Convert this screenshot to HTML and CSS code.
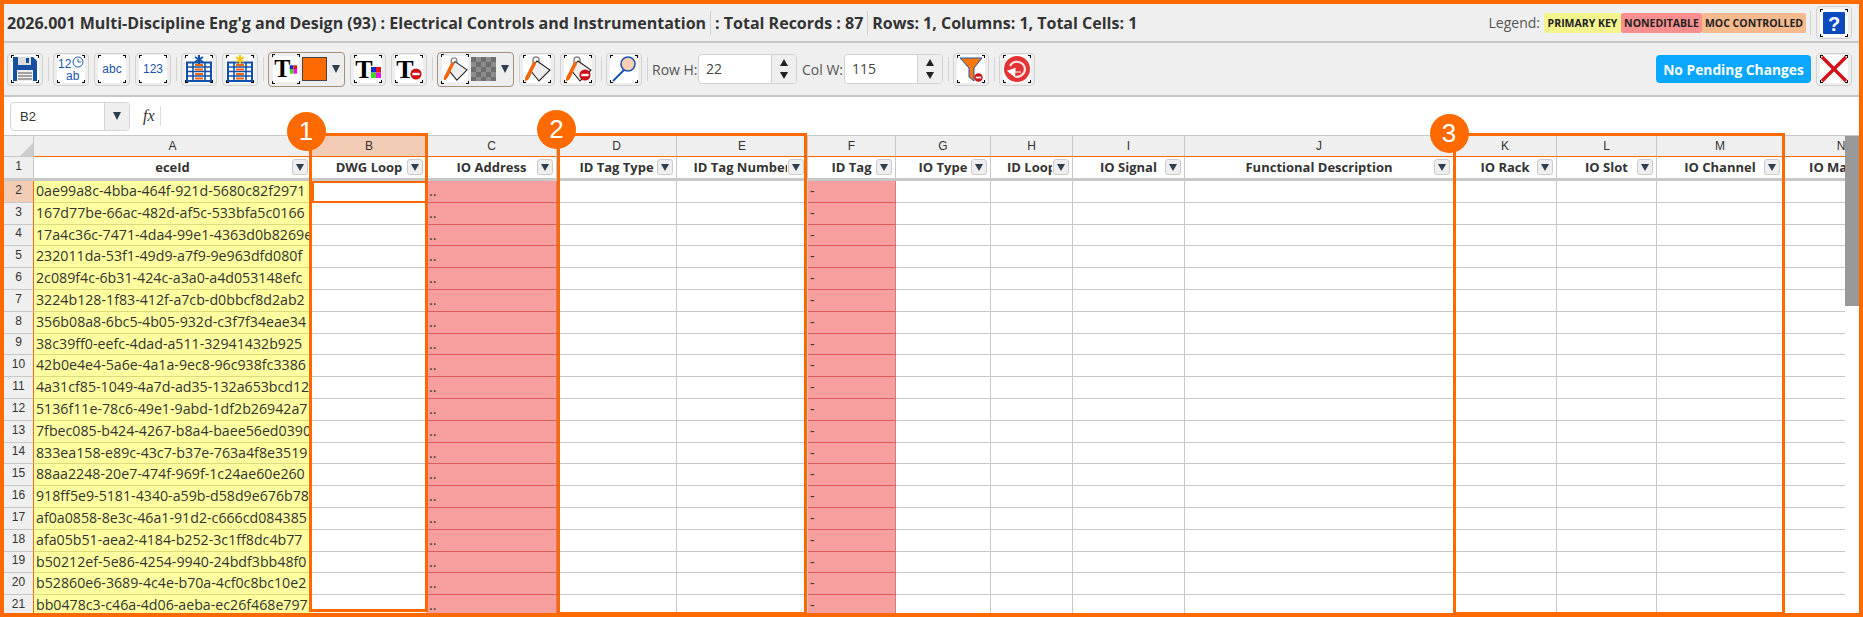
FILE: index.html
```html
<!DOCTYPE html>
<html lang="en">
<head>
    <meta charset="UTF-8">
    <title>Electrical Controls and Instrumentation</title>
    <link rel="stylesheet" href="styles.css">
</head>
<body>
    <svg class="defs" width="0" height="0">
        <symbol id="bucket" viewBox="0 0 28 28">
            <path d="M10 13 V5 a3 3 0 0 1 6 0 V10" fill="none" stroke="#888" stroke-width="1.5"/>
            <path d="M14 6 L27 15 L16 26 L7 15 Z" fill="#eee" stroke="#222" stroke-width="1.1"/>
            <path d="M12 6 C8 9 7 14 4 19 C2 22 1 26 3 26 C7 25 8 18 13 9 Z" fill="#f4640a"/>
        </symbol>
        <symbol id="minus" viewBox="0 0 12 12">
            <circle cx="6" cy="6" r="5.6" fill="#cc1016"/>
            <rect x="2.4" y="4.8" width="7.2" height="2.4" fill="#fff"/>
        </symbol>
        <symbol id="table" viewBox="0 0 28 28">
            <path d="M2 7.5 H26 V26 H2 Z" fill="#fff" stroke="#1150a8" stroke-width="2"/>
            <path d="M2 12 H26 M2 16.5 H26 M2 21 H26" stroke="#1150a8" stroke-width="1.6"/>
            <path d="M8 7.5 V26 M20 7.5 V26" stroke="#1150a8" stroke-width="1.6"/>
            <path d="M10 9 h8 v2 h-8z M10 13.5 h8 v2 h-8z M10 18 h8 v2 h-8z M10 22.5 h8 v2 h-8z" fill="#f0650f"/>
        </symbol>
        <pattern id="check" width="10" height="10" patternUnits="userSpaceOnUse">
            <rect width="10" height="10" fill="#8c8c8c"/>
            <rect width="5" height="5" fill="#6e6e6e"/>
            <rect x="5" y="5" width="5" height="5" fill="#6e6e6e"/>
        </pattern>
    </svg>

    <div class="page">
        <header class="title-bar">
            <span class="title-part">2026.001 Multi-Discipline Eng'g and Design (93) : Electrical Controls and Instrumentation</span>
            <span class="title-part">: Total Records : 87</span>
            <span class="title-part no-rule">Rows: 1, Columns: 1, Total Cells: 1</span>
            <div class="legend">
                <span class="legend-label">Legend:</span>
                <span class="chip chip-pk">PRIMARY KEY</span>
                <span class="chip chip-ro">NONEDITABLE</span>
                <span class="chip chip-moc">MOC CONTROLLED</span>
            </div>
            <span class="sep"></span>
            <button class="tool">
                <svg class="ico" viewBox="0 0 28 28"><rect x="3" y="3" width="22" height="22" rx="1" fill="#0a4bbd"/><text x="14" y="21.5" class="glyph-help">?</text></svg>
            </button>
        </header>

        <div class="toolbar">
            <button class="tool">
                <svg class="ico" viewBox="0 0 28 28">
                    <path d="M2 2 H22 L26 6 V26 H2 Z" fill="#14509f"/>
                    <rect x="7" y="2" width="13" height="8" fill="#ddd"/>
                    <rect x="15" y="3" width="3" height="5" fill="#14509f"/>
                    <rect x="6" y="15" width="16" height="11" fill="#eee"/>
                    <path d="M7 18 H21 M7 21 H21 M7 24 H21" stroke="#555" stroke-width="1.2"/>
                </svg>
            </button>
            <span class="sep"></span>
            <button class="tool">
                <svg class="ico" viewBox="0 0 28 28">
                    <text x="1" y="13" class="glyph-hand">12</text>
                    <text x="9" y="25" class="glyph-hand">ab</text>
                    <circle cx="21" cy="7" r="5" fill="none" stroke="#1a56b0" stroke-width="1"/>
                    <path d="M21 4 V7 H24" fill="none" stroke="#1a56b0" stroke-width="1"/>
                </svg>
            </button>
            <button class="tool">
                <svg class="ico" viewBox="0 0 28 28"><text x="14" y="18" class="glyph-hand mid">abc</text></svg>
            </button>
            <button class="tool">
                <svg class="ico" viewBox="0 0 28 28"><text x="14" y="18" class="glyph-hand mid">123</text></svg>
            </button>
            <span class="sep"></span>
            <button class="tool">
                <svg class="ico" viewBox="0 0 28 28">
                    <use href="#table"/>
                    <path d="M14 0 V9 M10 2 L18 7 M18 2 L10 7" stroke="#1150a8" stroke-width="2"/>
                </svg>
            </button>
            <button class="tool">
                <svg class="ico" viewBox="0 0 28 28">
                    <use href="#table"/>
                    <path d="M14 0 V9 M10 2 L18 7 M18 2 L10 7" stroke="#f5c60f" stroke-width="2"/>
                </svg>
            </button>
            <span class="sep"></span>
            <div class="tool-group">
                <span class="tool-inner">
                    <svg class="ico ico-small" viewBox="0 0 28 28">
                        <text x="10" y="23" class="glyph-t">T</text>
                        <rect x="18" y="10" width="4" height="4" fill="#0a2bd8"/><rect x="22" y="10" width="4" height="4" fill="#e8141c"/>
                        <rect x="18" y="14" width="4" height="5" fill="#3ed61f"/><rect x="22" y="14" width="4" height="5" fill="#ea14e0"/>
                    </svg>
                </span>
                <span class="swatch swatch-orange"></span>
                <span class="caret"></span>
            </div>
            <button class="tool">
                <svg class="ico" viewBox="0 0 28 28">
                    <text x="10" y="23" class="glyph-t">T</text>
                    <rect x="17" y="12" width="5" height="5.5" fill="#0a2bd8"/><rect x="22" y="12" width="5" height="5.5" fill="#e8141c"/>
                    <rect x="17" y="17.5" width="5" height="5.5" fill="#3ed61f"/><rect x="22" y="17.5" width="5" height="5.5" fill="#ea14e0"/>
                </svg>
            </button>
            <button class="tool">
                <svg class="ico" viewBox="0 0 28 28">
                    <text x="10" y="23" class="glyph-t">T</text>
                    <use href="#minus" x="15" y="13" width="12" height="12"/>
                </svg>
            </button>
            <span class="sep"></span>
            <div class="tool-group">
                <span class="tool-inner">
                    <svg class="ico ico-small" viewBox="0 0 28 28"><use href="#bucket"/></svg>
                </span>
                <span class="swatch swatch-check">
                    <svg width="25" height="24"><rect width="25" height="24" fill="url(#check)"/></svg>
                </span>
                <span class="caret"></span>
            </div>
            <button class="tool">
                <svg class="ico" viewBox="0 0 28 28"><use href="#bucket"/></svg>
            </button>
            <button class="tool">
                <svg class="ico" viewBox="0 0 28 28"><use href="#bucket"/><use href="#minus" x="15" y="14" width="12" height="12"/></svg>
            </button>
            <span class="sep"></span>
            <button class="tool">
                <svg class="ico" viewBox="0 0 28 28">
                    <path d="M15 14 L3 26" stroke="#1a56b0" stroke-width="2"/>
                    <circle cx="18" cy="9" r="7" fill="#fad0b4" stroke="#1a56b0" stroke-width="1.6"/>
                </svg>
            </button>
            <span class="sep"></span>
            <label class="spin-label spin-label-row">Row H:</label>
            <div class="spin">
                <span class="spin-value">22</span>
                <span class="spin-arrows"><i class="up"></i><i class="down"></i></span>
            </div>
            <label class="spin-label spin-label-col">Col W:</label>
            <div class="spin">
                <span class="spin-value">115</span>
                <span class="spin-arrows"><i class="up"></i><i class="down"></i></span>
            </div>
            <span class="sep"></span>
            <button class="tool">
                <svg class="ico" viewBox="0 0 28 28">
                    <path d="M3 3 H25 L17 13 V26 L12 22 V13 Z" fill="#f8760c" stroke="#1a56b0" stroke-width="1"/>
                    <use href="#minus" x="17" y="18" width="9" height="9"/>
                </svg>
            </button>
            <span class="sep"></span>
            <button class="tool">
                <svg class="ico" viewBox="0 0 28 28">
                    <circle cx="14" cy="14" r="13" fill="#e23434"/>
                    <path d="M7 11 A8 8 0 0 1 22 14 A8 8 0 0 1 12 21.5" fill="none" stroke="#fbe4e4" stroke-width="2.2"/>
                    <path d="M5 16 L12 13.5 L11.5 21 Z M11 17 H18" fill="#fff" stroke="#fff" stroke-width="1.2"/>
                </svg>
            </button>
            <button class="pending">No Pending Changes</button>
            <button class="tool">
                <svg class="ico" viewBox="0 0 28 28"><path d="M2 2 L26 26 M26 2 L2 26" stroke="#d4121a" stroke-width="3.4"/></svg>
            </button>
        </div>

        <div class="formula-bar">
            <div class="name-box">
                <span class="name-value">B2</span>
                <span class="name-drop"><span class="caret"></span></span>
            </div>
            <span class="fx">fx</span>
        </div>

        <div class="sheet">
            <div class="sheet-scroll">
                <div class="grid">
                    <div class="corner"></div>
                    <div class="col">A</div><div class="col col-active">B</div><div class="col">C</div><div class="col">D</div><div class="col">E</div><div class="col">F</div><div class="col">G</div><div class="col">H</div><div class="col">I</div><div class="col">J</div><div class="col">K</div><div class="col">L</div><div class="col">M</div><div class="col">N</div>

                    <div class="rh rh-head">1</div>
                    <div class="head">eceId<span class="filter"></span></div>
                    <div class="head">DWG Loop<span class="filter"></span></div>
                    <div class="head">IO Address<span class="filter"></span></div>
                    <div class="head">ID Tag Type<span class="filter"></span></div>
                    <div class="head">ID Tag Number<span class="filter"></span></div>
                    <div class="head">ID Tag<span class="filter"></span></div>
                    <div class="head">IO Type<span class="filter"></span></div>
                    <div class="head">ID Loop<span class="filter"></span></div>
                    <div class="head">IO Signal<span class="filter"></span></div>
                    <div class="head">Functional Description<span class="filter"></span></div>
                    <div class="head">IO Rack<span class="filter"></span></div>
                    <div class="head">IO Slot<span class="filter"></span></div>
                    <div class="head">IO Channel<span class="filter"></span></div>
                    <div class="head">IO Master<span class="filter"></span></div>

                    <div class="rh rh-active">2</div><div class="cell pk">0ae99a8c-4bba-464f-921d-5680c82f2971</div><div class="cell selected"></div><div class="cell ro">..</div><div class="cell"></div><div class="cell"></div><div class="cell ro">-</div><div class="cell"></div><div class="cell"></div><div class="cell"></div><div class="cell"></div><div class="cell"></div><div class="cell"></div><div class="cell"></div><div class="cell"></div>
                    <div class="rh">3</div><div class="cell pk">167d77be-66ac-482d-af5c-533bfa5c0166</div><div class="cell"></div><div class="cell ro">..</div><div class="cell"></div><div class="cell"></div><div class="cell ro">-</div><div class="cell"></div><div class="cell"></div><div class="cell"></div><div class="cell"></div><div class="cell"></div><div class="cell"></div><div class="cell"></div><div class="cell"></div>
                    <div class="rh">4</div><div class="cell pk">17a4c36c-7471-4da4-99e1-4363d0b8269e</div><div class="cell"></div><div class="cell ro">..</div><div class="cell"></div><div class="cell"></div><div class="cell ro">-</div><div class="cell"></div><div class="cell"></div><div class="cell"></div><div class="cell"></div><div class="cell"></div><div class="cell"></div><div class="cell"></div><div class="cell"></div>
                    <div class="rh">5</div><div class="cell pk">232011da-53f1-49d9-a7f9-9e963dfd080f</div><div class="cell"></div><div class="cell ro">..</div><div class="cell"></div><div class="cell"></div><div class="cell ro">-</div><div class="cell"></div><div class="cell"></div><div class="cell"></div><div class="cell"></div><div class="cell"></div><div class="cell"></div><div class="cell"></div><div class="cell"></div>
                    <div class="rh">6</div><div class="cell pk">2c089f4c-6b31-424c-a3a0-a4d053148efc</div><div class="cell"></div><div class="cell ro">..</div><div class="cell"></div><div class="cell"></div><div class="cell ro">-</div><div class="cell"></div><div class="cell"></div><div class="cell"></div><div class="cell"></div><div class="cell"></div><div class="cell"></div><div class="cell"></div><div class="cell"></div>
                    <div class="rh">7</div><div class="cell pk">3224b128-1f83-412f-a7cb-d0bbcf8d2ab2</div><div class="cell"></div><div class="cell ro">..</div><div class="cell"></div><div class="cell"></div><div class="cell ro">-</div><div class="cell"></div><div class="cell"></div><div class="cell"></div><div class="cell"></div><div class="cell"></div><div class="cell"></div><div class="cell"></div><div class="cell"></div>
                    <div class="rh">8</div><div class="cell pk">356b08a8-6bc5-4b05-932d-c3f7f34eae34</div><div class="cell"></div><div class="cell ro">..</div><div class="cell"></div><div class="cell"></div><div class="cell ro">-</div><div class="cell"></div><div class="cell"></div><div class="cell"></div><div class="cell"></div><div class="cell"></div><div class="cell"></div><div class="cell"></div><div class="cell"></div>
                    <div class="rh">9</div><div class="cell pk">38c39ff0-eefc-4dad-a511-32941432b925</div><div class="cell"></div><div class="cell ro">..</div><div class="cell"></div><div class="cell"></div><div class="cell ro">-</div><div class="cell"></div><div class="cell"></div><div class="cell"></div><div class="cell"></div><div class="cell"></div><div class="cell"></div><div class="cell"></div><div class="cell"></div>
                    <div class="rh">10</div><div class="cell pk">42b0e4e4-5a6e-4a1a-9ec8-96c938fc3386</div><div class="cell"></div><div class="cell ro">..</div><div class="cell"></div><div class="cell"></div><div class="cell ro">-</div><div class="cell"></div><div class="cell"></div><div class="cell"></div><div class="cell"></div><div class="cell"></div><div class="cell"></div><div class="cell"></div><div class="cell"></div>
                    <div class="rh">11</div><div class="cell pk">4a31cf85-1049-4a7d-ad35-132a653bcd12</div><div class="cell"></div><div class="cell ro">..</div><div class="cell"></div><div class="cell"></div><div class="cell ro">-</div><div class="cell"></div><div class="cell"></div><div class="cell"></div><div class="cell"></div><div class="cell"></div><div class="cell"></div><div class="cell"></div><div class="cell"></div>
                    <div class="rh">12</div><div class="cell pk">5136f11e-78c6-49e1-9abd-1df2b26942a7</div><div class="cell"></div><div class="cell ro">..</div><div class="cell"></div><div class="cell"></div><div class="cell ro">-</div><div class="cell"></div><div class="cell"></div><div class="cell"></div><div class="cell"></div><div class="cell"></div><div class="cell"></div><div class="cell"></div><div class="cell"></div>
                    <div class="rh">13</div><div class="cell pk">7fbec085-b424-4267-b8a4-baee56ed0390</div><div class="cell"></div><div class="cell ro">..</div><div class="cell"></div><div class="cell"></div><div class="cell ro">-</div><div class="cell"></div><div class="cell"></div><div class="cell"></div><div class="cell"></div><div class="cell"></div><div class="cell"></div><div class="cell"></div><div class="cell"></div>
                    <div class="rh">14</div><div class="cell pk">833ea158-e89c-43c7-b37e-763a4f8e3519</div><div class="cell"></div><div class="cell ro">..</div><div class="cell"></div><div class="cell"></div><div class="cell ro">-</div><div class="cell"></div><div class="cell"></div><div class="cell"></div><div class="cell"></div><div class="cell"></div><div class="cell"></div><div class="cell"></div><div class="cell"></div>
                    <div class="rh">15</div><div class="cell pk">88aa2248-20e7-474f-969f-1c24ae60e260</div><div class="cell"></div><div class="cell ro">..</div><div class="cell"></div><div class="cell"></div><div class="cell ro">-</div><div class="cell"></div><div class="cell"></div><div class="cell"></div><div class="cell"></div><div class="cell"></div><div class="cell"></div><div class="cell"></div><div class="cell"></div>
                    <div class="rh">16</div><div class="cell pk">918ff5e9-5181-4340-a59b-d58d9e676b78</div><div class="cell"></div><div class="cell ro">..</div><div class="cell"></div><div class="cell"></div><div class="cell ro">-</div><div class="cell"></div><div class="cell"></div><div class="cell"></div><div class="cell"></div><div class="cell"></div><div class="cell"></div><div class="cell"></div><div class="cell"></div>
                    <div class="rh">17</div><div class="cell pk">af0a0858-8e3c-46a1-91d2-c666cd084385</div><div class="cell"></div><div class="cell ro">..</div><div class="cell"></div><div class="cell"></div><div class="cell ro">-</div><div class="cell"></div><div class="cell"></div><div class="cell"></div><div class="cell"></div><div class="cell"></div><div class="cell"></div><div class="cell"></div><div class="cell"></div>
                    <div class="rh">18</div><div class="cell pk">afa05b51-aea2-4184-b252-3c1ff8dc4b77</div><div class="cell"></div><div class="cell ro">..</div><div class="cell"></div><div class="cell"></div><div class="cell ro">-</div><div class="cell"></div><div class="cell"></div><div class="cell"></div><div class="cell"></div><div class="cell"></div><div class="cell"></div><div class="cell"></div><div class="cell"></div>
                    <div class="rh">19</div><div class="cell pk">b50212ef-5e86-4254-9940-24bdf3bb48f0</div><div class="cell"></div><div class="cell ro">..</div><div class="cell"></div><div class="cell"></div><div class="cell ro">-</div><div class="cell"></div><div class="cell"></div><div class="cell"></div><div class="cell"></div><div class="cell"></div><div class="cell"></div><div class="cell"></div><div class="cell"></div>
                    <div class="rh">20</div><div class="cell pk">b52860e6-3689-4c4e-b70a-4cf0c8bc10e2</div><div class="cell"></div><div class="cell ro">..</div><div class="cell"></div><div class="cell"></div><div class="cell ro">-</div><div class="cell"></div><div class="cell"></div><div class="cell"></div><div class="cell"></div><div class="cell"></div><div class="cell"></div><div class="cell"></div><div class="cell"></div>
                    <div class="rh">21</div><div class="cell pk">bb0478c3-c46a-4d06-aeba-ec26f468e797</div><div class="cell"></div><div class="cell ro">..</div><div class="cell"></div><div class="cell"></div><div class="cell ro">-</div><div class="cell"></div><div class="cell"></div><div class="cell"></div><div class="cell"></div><div class="cell"></div><div class="cell"></div><div class="cell"></div><div class="cell"></div>
                </div>
            </div>
            <div class="scrollbar"><div class="scroll-thumb"></div></div>
        </div>

        <!-- callouts drawn over the sheet -->
        <div class="callout callout-1"><span class="badge">1</span></div>
        <div class="callout callout-2"><span class="badge">2</span></div>
        <div class="callout callout-3"><span class="badge">3</span></div>
    </div>
</body>
</html>
```

FILE: styles.css
```css
:root {
    --orange: #ff6a00;
    --rule: #c8c8c8;
    --panel: #efefef;
    --text: #333;
}

* {
    margin: 0;
    padding: 0;
    box-sizing: border-box;
}

body {
    background: #fff;
    color: var(--text);
    font-family: 'Open Sans', sans-serif;
    overflow: hidden;
}

.defs {
    position: absolute;
}

.page {
    position: relative;
    display: flex;
    flex-direction: column;
    width: 1863px;
    height: 617px;
    border: 4px solid var(--orange);
    overflow: hidden;
}

/* title row */
.title-bar {
    display: flex;
    align-items: center;
    height: 39px;
    padding: 0 7px 0 3px;
    background: var(--panel);
    border-bottom: 2px solid var(--rule);
    font-size: 16px;
    font-weight: 700;
    white-space: nowrap;
}

.title-part {
    padding-right: 4px;
    margin-right: 4px;
    border-right: 1px solid #d0d0d0;
    line-height: 24px;
}

.title-part.no-rule {
    border-right: 0;
}

.legend {
    display: flex;
    align-items: center;
    margin-left: auto;
}

.legend-label {
    margin-right: 4px;
    font-size: 14px;
    font-weight: 400;
    color: #555;
}

.chip {
    display: flex;
    align-items: center;
    justify-content: center;
    height: 20px;
    border-radius: 2px;
    font-size: 10.5px;
    font-weight: 700;
    color: #222;
}

.chip-pk { width: 77px; background: #f5f58d; }
.chip-ro { width: 81px; background: #f98f8f; }
.chip-moc { width: 104px; background: #f7b98e; }

.sep {
    flex: none;
    width: 1px;
    height: 24px;
    background: #d4d4d4;
}

.title-bar .sep {
    margin: 0 5px 0 4px;
}

/* toolbar */
.toolbar {
    display: flex;
    align-items: center;
    gap: 5px;
    height: 54px;
    padding: 0 7px 0 3px;
    background: var(--panel);
    border-bottom: 2px solid var(--rule);
}

.toolbar .sep {
    margin-right: -1px;
}

.tool {
    position: relative;
    flex: none;
    display: flex;
    align-items: center;
    justify-content: center;
    width: 36px;
    height: 33px;
    background: #eee;
    border: 1px solid #d2d2d2;
    border-radius: 4px;
}

.tool::after,
.tool-inner::after {
    content: "";
    position: absolute;
    inset: 1.5px 3px;
    background:
        linear-gradient(#000, #000) 0 0 / 3px 1px no-repeat,
        linear-gradient(#000, #000) 0 0 / 1px 3px no-repeat,
        linear-gradient(#000, #000) 100% 0 / 3px 1px no-repeat,
        linear-gradient(#000, #000) 100% 0 / 1px 3px no-repeat,
        linear-gradient(#000, #000) 0 100% / 3px 1px no-repeat,
        linear-gradient(#000, #000) 0 100% / 1px 3px no-repeat,
        linear-gradient(#000, #000) 100% 100% / 3px 1px no-repeat,
        linear-gradient(#000, #000) 100% 100% / 1px 3px no-repeat;
}

.ico {
    display: block;
    flex: none;
    width: 28px;
    height: 28px;
    background: #fff;
}

.ico-small {
    width: 26px;
    height: 26px;
}

.tool-group {
    flex: none;
    display: flex;
    align-items: center;
    width: 77px;
    height: 35px;
    padding-left: 2px;
    border: 1px solid #a58f7d;
    border-radius: 4px;
    background: #eee;
}

.tool-inner {
    position: relative;
    flex: none;
    display: flex;
    align-items: center;
    justify-content: center;
    width: 30px;
    height: 30px;
    margin-right: 1px;
}

.tool-inner::after {
    inset: 0 1px;
}

.swatch {
    flex: none;
    width: 25px;
    height: 24px;
    margin-right: 5px;
}

.swatch svg {
    display: block;
}

.swatch-orange {
    background: var(--orange);
    border: 1px solid #444;
}

.caret {
    width: 0;
    height: 0;
    border-left: 4px solid transparent;
    border-right: 4px solid transparent;
    border-top: 8px solid #2c3e50;
}

.glyph-hand {
    font-family: 'Liberation Sans', sans-serif;
    font-size: 12px;
    fill: #1a56b0;
}

.glyph-hand.mid {
    text-anchor: middle;
}

.glyph-t {
    font-family: 'Liberation Serif', serif;
    font-weight: 700;
    font-size: 26px;
    text-anchor: middle;
    fill: #000;
}

.glyph-help {
    font-family: 'Liberation Sans', sans-serif;
    font-weight: 700;
    font-size: 20px;
    text-anchor: middle;
    fill: #fff;
}

.spin-label {
    flex: none;
    font-size: 14px;
    color: #555;
    white-space: nowrap;
}

.spin-label-row { width: 41px; }
.spin-label-col { width: 37px; }

.spin {
    flex: none;
    display: flex;
    width: 99px;
    height: 30px;
    background: #fff;
    border: 1px solid #d2d2d2;
    border-radius: 4px;
    overflow: hidden;
}

.spin-value {
    flex: 1;
    padding-left: 7px;
    font-size: 14px;
    line-height: 28px;
    color: #444;
}

.spin-arrows {
    flex: none;
    display: flex;
    flex-direction: column;
    align-items: center;
    justify-content: center;
    gap: 6px;
    width: 25px;
    background: var(--panel);
    border-left: 1px solid #d2d2d2;
}

.spin-arrows i {
    display: block;
    width: 0;
    height: 0;
    border-left: 4px solid transparent;
    border-right: 4px solid transparent;
}

.spin-arrows .up { border-bottom: 7px solid #222; }
.spin-arrows .down { border-top: 7px solid #222; }

.pending {
    flex: none;
    width: 155px;
    height: 28px;
    margin-left: auto;
    border: 0;
    border-radius: 4px;
    background: #0aa7ff;
    color: #fff;
    font-family: 'Open Sans', sans-serif;
    font-size: 13.8px;
    font-weight: 700;
}

/* formula bar */
.formula-bar {
    display: flex;
    align-items: center;
    height: 38px;
    padding-left: 6px;
    background: #fff;
}

.name-box {
    display: flex;
    width: 120px;
    height: 29px;
    background: #fff;
    border: 1px solid #d4d4d4;
    border-radius: 4px;
    overflow: hidden;
}

.name-value {
    flex: 1;
    padding-left: 9px;
    font-family: 'Liberation Sans', sans-serif;
    font-size: 13px;
    line-height: 27px;
}

.name-drop {
    display: flex;
    align-items: center;
    justify-content: center;
    width: 25px;
    background: var(--panel);
    border-left: 1px solid #d4d4d4;
}

.fx {
    margin-left: 13px;
    padding-right: 5px;
    border-right: 1px solid #ddd;
    font-family: 'Liberation Serif', serif;
    font-style: italic;
    font-size: 16px;
    line-height: 20px;
}

/* sheet */
.sheet {
    flex: 1;
    min-height: 0;
    display: flex;
    border-top: 1px solid var(--rule);
}

.sheet-scroll {
    flex: 1;
    min-width: 0;
    overflow: hidden;
}

.grid {
    display: grid;
    grid-template-columns: 30px 278px 115px 130px 120px 131px 88px 95px 82px 112px 269px 103px 100px 127px 115px;
    grid-template-rows: 21px 24px;
    grid-auto-rows: 21.8px;
}

.scrollbar {
    flex: none;
    width: 14px;
    background: #fff;
}

.scroll-thumb {
    height: 170px;
    background: #999;
}

.corner {
    position: relative;
    background: var(--panel);
    border-right: 1px solid var(--rule);
    border-bottom: 1px solid var(--rule);
}

.corner::after {
    content: "";
    position: absolute;
    right: 0;
    bottom: 0;
    border-left: 13px solid transparent;
    border-bottom: 13px solid #ccc;
}

.col {
    display: flex;
    align-items: center;
    justify-content: center;
    background: var(--panel);
    border-right: 1px solid var(--rule);
    border-bottom: 1px solid var(--orange);
    font-family: 'Liberation Sans', sans-serif;
    font-size: 12px;
}

.col-active {
    background: #f3ccb5;
}

.rh {
    display: flex;
    align-items: center;
    justify-content: center;
    padding-bottom: 3px;
    background: var(--panel);
    border-right: 1px solid var(--orange);
    border-bottom: 1px solid var(--rule);
    font-family: 'Liberation Sans', sans-serif;
    font-size: 12px;
}

.rh-head {
    border-right-color: var(--rule);
    border-bottom: 3px solid var(--rule);
}

.rh-active {
    background: #f3ccb5;
}

.head {
    position: relative;
    padding-top: 1px;
    background: #fff;
    border-right: 1px solid var(--rule);
    border-bottom: 3px solid var(--rule);
    font-size: 13px;
    font-weight: 700;
    line-height: 19px;
    text-align: center;
    white-space: nowrap;
    overflow: hidden;
}

.filter {
    position: absolute;
    right: 3px;
    top: 2px;
    width: 16px;
    height: 16px;
    background: #eee;
    border: 1px solid #ccc;
    border-radius: 3px;
    box-shadow: -1px 0 0 #fff;
}

.filter::after {
    content: "";
    position: absolute;
    left: 3px;
    top: 4px;
    border-left: 4px solid transparent;
    border-right: 4px solid transparent;
    border-top: 7px solid #2c3e50;
}

.cell {
    padding-left: 2px;
    background: #fff;
    border-right: 1px solid var(--rule);
    border-bottom: 1px solid var(--rule);
    font-size: 14.2px;
    line-height: 20px;
    white-space: nowrap;
    overflow: hidden;
}

.pk {
    background: #ffff9f;
    border-right: 0;
    border-bottom-color: #dcdc7c;
}

.ro {
    background: #f79f9f;
    border-right-color: #d97a7a;
    border-bottom-color: #d95f5f;
}

.selected {
    border: 2px solid var(--orange);
}

/* numbered callouts */
.callout {
    position: absolute;
    top: 129px;
    height: 482px;
    border: 3px solid var(--orange);
}

.callout-1 { left: 304.5px; width: 119.5px; height: 479px; }
.callout-2 { left: 553px; width: 250px; }
.callout-3 { left: 1448.5px; width: 332.5px; }

.badge {
    position: absolute;
    display: flex;
    align-items: center;
    justify-content: center;
    width: 39px;
    height: 39px;
    border-radius: 50%;
    background: var(--orange);
    color: #fff;
    font-family: 'Liberation Sans', sans-serif;
    font-size: 26px;
}

.callout-1 .badge { left: -25px; top: -24px; }
.callout-2 .badge { left: -23px; top: -26px; }
.callout-3 .badge { left: -26px; top: -22px; }
```
